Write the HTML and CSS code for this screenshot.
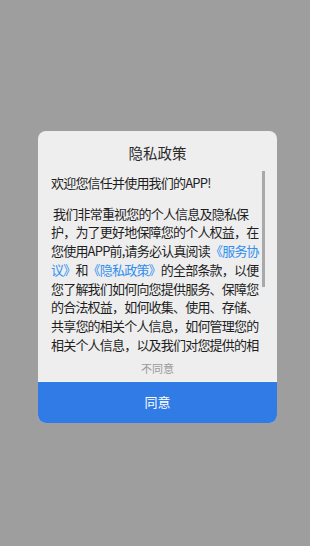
FILE: index.html
```html
<!DOCTYPE html>
<html lang="zh-CN">
<head>
    <meta charset="UTF-8">
    <meta name="viewport" content="width=device-width, initial-scale=1.0">
    <title>隐私政策</title>
    <link rel="stylesheet" href="styles.css">
</head>
<body>
    <div class="overlay">
        <div class="dialog">
            <div class="dialog-title">隐私政策</div>

            <div class="dialog-body">
                <div class="dialog-scroll">
                    <p class="welcome">欢迎您信任并使用我们的APP!</p>
                    <p class="policy">&nbsp;我们非常重视您的个人信息及隐私保<br>护，为了更好地保障您的个人权益，在<br>您使用APP前,请务必认真阅读<a href="#" class="link">《服务协<br>议》</a>和<a href="#" class="link">《隐私政策》</a>的全部条款，以便<br>您了解我们如何向您提供服务、保障您<br>的合法权益，如何收集、使用、存储、<br>共享您的相关个人信息，如何管理您的<br>相关个人信息，以及我们对您提供的相</p>
                </div>
                <!-- barra de rolagem -->
                <div class="scroll-thumb"></div>
            </div>

            <div class="btn-refuse">不同意</div>
            <div class="btn-agree">同意</div>
        </div>
    </div>
</body>
</html>
```

FILE: styles.css
```css
* {
    margin: 0;
    padding: 0;
    box-sizing: border-box;
}

body {
    font-family: "Noto Sans CJK SC", "Noto Sans", sans-serif;
    background: #9e9e9e;
    color: #222;
    width: 310px;
    height: 546px;
    overflow: hidden;
}

.overlay {
    padding-top: 131px;
    padding-left: 38px;
}

.dialog {
    width: 239px;
    background: #eeeeee;
    border-radius: 8px;
    overflow: hidden;
}

.dialog-title {
    height: 40px;
    padding-top: 13px;
    text-align: center;
    font-size: 14.5px;
    line-height: 18px;
    color: #2a2a2a;
}

.dialog-body {
    position: relative;
    height: 184px;
    overflow: hidden;
    padding: 3px 12px 0 13px;
}

.dialog-scroll {
    font-size: 13px;
    letter-spacing: -0.8px;
    line-height: 18.7px;
    color: #1e1e1e;
    white-space: nowrap;
}

.welcome {
    margin-bottom: 12px;
}

.link {
    color: #2f8ff0;
    text-decoration: none;
}

.scroll-thumb {
    position: absolute;
    top: 0;
    right: 12px;
    width: 3px;
    height: 116px;
    background: #a9a9a9;
}

.btn-refuse {
    height: 26px;
    text-align: center;
    font-size: 11px;
    line-height: 26px;
    color: #9a9a9a;
}

.btn-agree {
    height: 42px;
    background: #317be6;
    border-top: 1px solid #f4f4f4;
    text-align: center;
    font-size: 13px;
    line-height: 40px;
    color: #fff;
}
```
